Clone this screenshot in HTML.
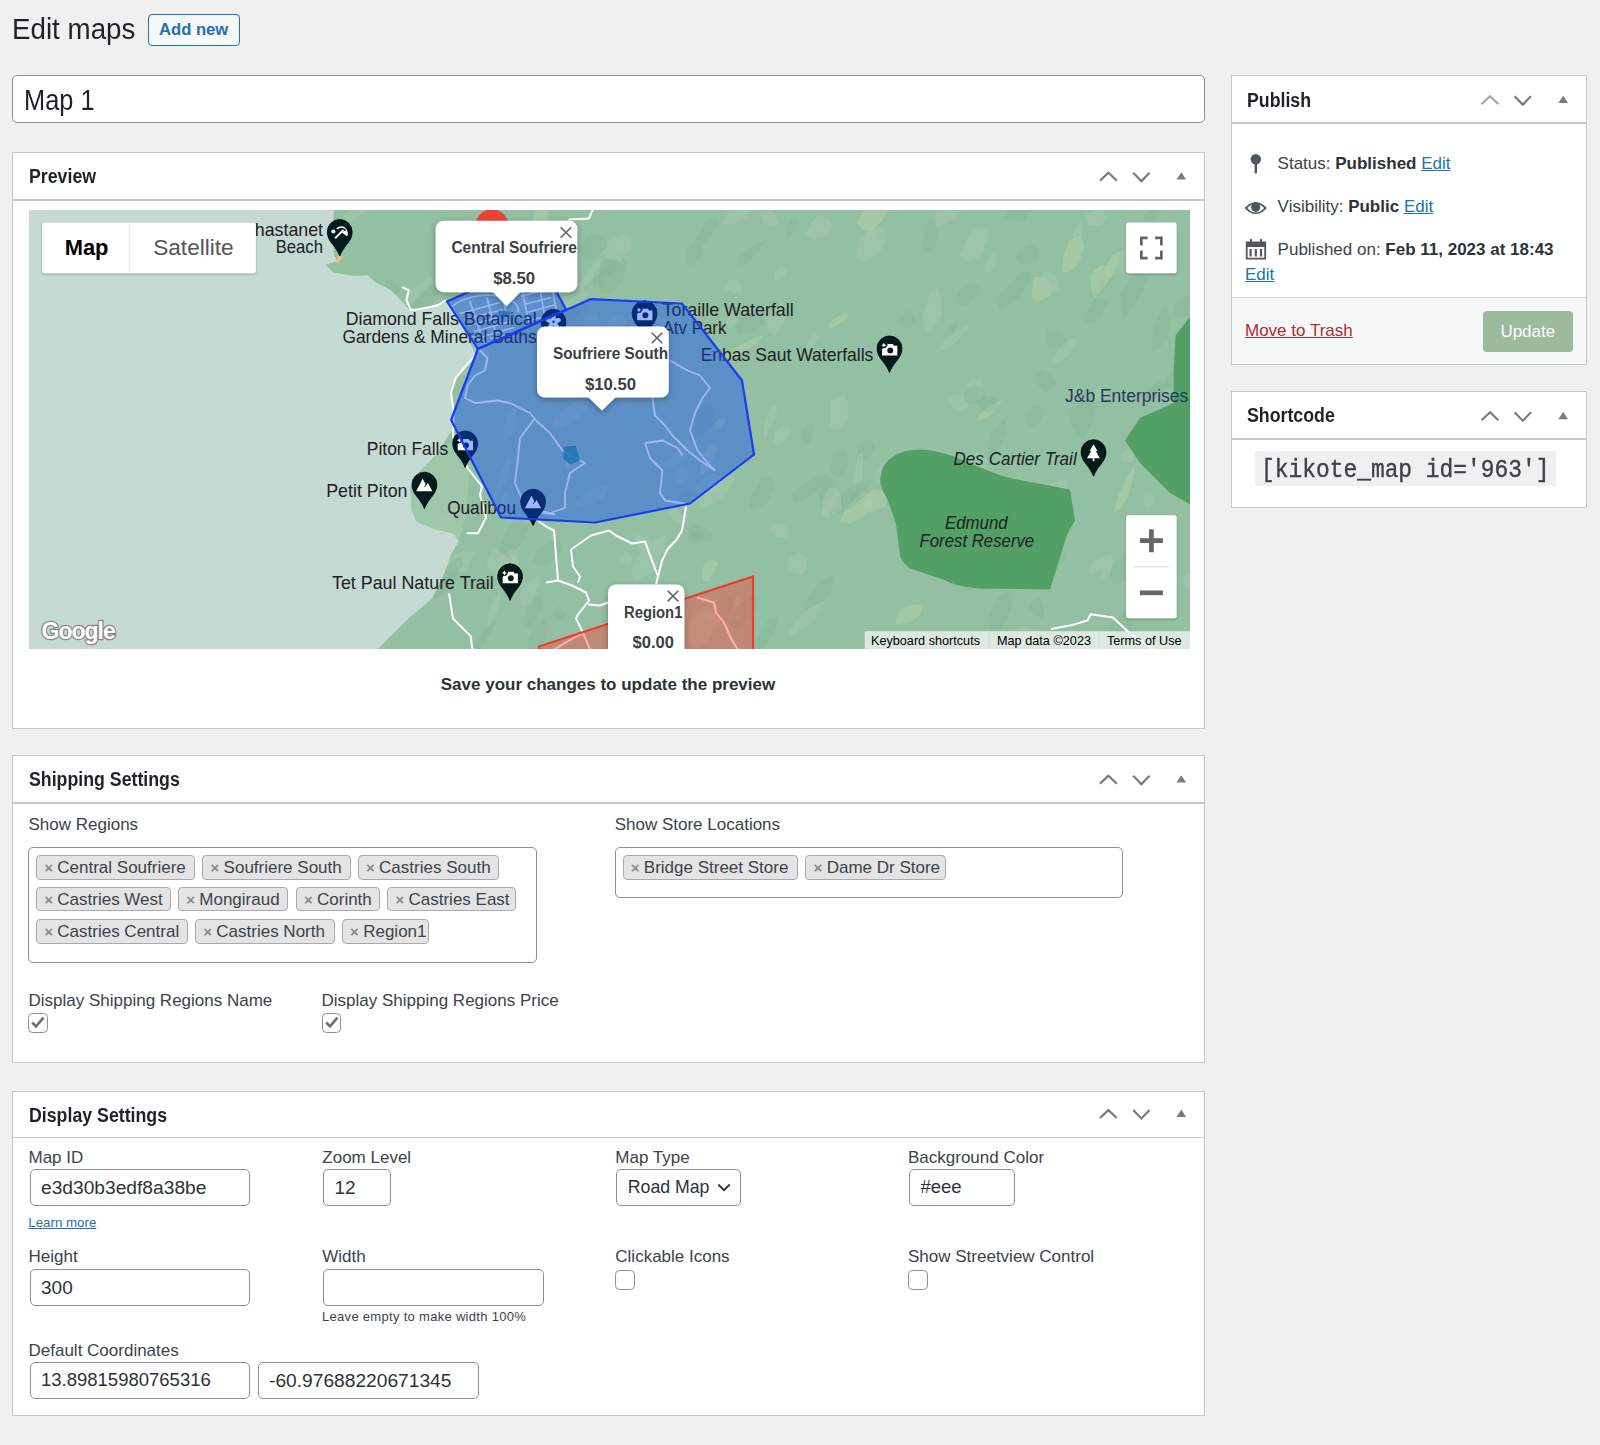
<!DOCTYPE html><html><head><meta charset="utf-8"><style>
*{box-sizing:border-box;margin:0;padding:0}
html,body{width:1600px;height:1445px;overflow:hidden;background:#f0f0f1;font-family:"Liberation Sans",sans-serif}
.t{position:absolute;line-height:1;white-space:nowrap}
.r{position:absolute}
.box{position:absolute;background:#fff;border:1.6px solid #c6c7ca}
.hb{position:absolute;height:1.8px;background:#c6c7ca}
.inp{position:absolute;background:#fff;border:1.3px solid #8c8f94;border-radius:5px}
.cb{position:absolute;width:20px;height:20px;background:#fff;border:1.3px solid #8c8f94;border-radius:5px}
.tag{position:absolute;height:25px;background:#e4e4e4;border:1.3px solid #aaa;border-radius:5px}
a{color:#2271b1}
svg{position:absolute;overflow:visible}
</style></head><body><div class="t" style="left:11.5px;top:14.36px;font-size:30px;color:#1d2327;transform:scaleX(0.925);transform-origin:0 0">Edit maps</div>
<div class="r" style="left:147.7px;top:13.5px;width:92px;height:32px;border:1.3px solid #2271b1;border-radius:4px;background:#f6f7f7"></div>
<div class="t" style="left:193.7px;transform:translateX(-50%);top:21.75px;font-size:16.6px;color:#2271b1;font-weight:700;">Add new</div>
<div class="r" style="left:11.5px;top:75.2px;width:1193.5px;height:47.6px;background:#fff;border:1.3px solid #8c8f94;border-radius:5px"></div>
<div class="t" style="left:24px;top:85.43px;font-size:29.5px;color:#1d2327;transform:scaleX(0.86);transform-origin:0 0">Map 1</div>
<div class="box" style="left:11.5px;top:152.3px;width:1193.5px;height:577px"></div>
<div class="hb" style="left:12px;top:199.2px;width:1192px"></div>
<div class="t" style="left:28.5px;top:167.39px;font-size:19.5px;color:#1d2327;font-weight:700;transform:scaleX(0.91);transform-origin:0 0">Preview</div>
<svg style="left:0;top:0" width="1600" height="1445" viewBox="0 0 1600 1445"><polyline points="1100.0,180.6 1108.4,172.70000000000002 1116.8000000000002,180.6" fill="none" stroke="#787c82" stroke-width="2.2"/><polyline points="1133.2,172.70000000000002 1141.4,181.1 1149.6000000000001,172.70000000000002" fill="none" stroke="#787c82" stroke-width="2.2"/><polygon points="1181.3,172.20000000000002 1186.1,179.6 1176.5,179.6" fill="#787c82"/></svg>
<div class="r" style="left:29px;top:209.5px;width:1161px;height:439px;overflow:hidden;background:#93bfa2">
<svg style="left:0;top:0" width="1161" height="439" viewBox="29 209.5 1161 439" font-family="Liberation Sans, sans-serif">
<polygon points="602.9,257.6 600.4,265.3 592.9,278.1 580.6,289.9 580.9,283.3 584.5,274.2 594.3,261.0" fill="#a2c8ac" opacity="0.6"/>
<polygon points="344.7,581.6 347.7,584.5 344.6,595.0 341.4,599.9 336.6,602.3 336.1,592.2 340.5,583.2" fill="#aacca8" opacity="0.7"/>
<polygon points="1022.4,509.3 1024.2,515.4 1021.5,527.4 1013.1,528.5 1007.0,523.3 1006.1,516.6 1015.1,509.2" fill="#88b596" opacity="0.4"/>
<polygon points="939.5,461.7 936.7,472.7 928.6,483.0 912.9,486.2 911.7,478.7 918.9,468.5 930.2,463.3" fill="#88b596" opacity="0.4"/>
<polygon points="356.6,544.5 361.1,548.6 358.3,556.4 351.6,558.2 346.4,555.7 347.9,550.7 352.0,544.7" fill="#88b596" opacity="0.4"/>
<polygon points="513.3,405.1 517.0,412.1 515.9,428.6 511.2,435.9 503.4,440.8 503.7,426.8 508.4,412.2" fill="#a2c8ac" opacity="0.6"/>
<polygon points="872.7,227.5 876.0,230.6 877.1,236.4 870.3,240.8 866.8,238.2 866.4,233.3 867.0,225.6" fill="#a2c8ac" opacity="0.6"/>
<polygon points="722.5,416.7 725.8,418.8 723.1,426.3 718.8,428.7 712.8,429.8 714.9,422.7 718.9,417.1" fill="#aacca8" opacity="0.7"/>
<polygon points="1004.5,419.6 1006.3,432.5 997.8,451.6 990.2,463.8 987.6,457.5 988.1,446.6 993.7,428.5" fill="#88b596" opacity="0.4"/>
<polygon points="712.6,607.8 720.8,617.3 709.3,637.9 696.2,651.4 689.1,639.8 687.2,626.3 703.0,606.6" fill="#a2c8ac" opacity="0.6"/>
<polygon points="474.3,551.8 469.6,561.9 465.5,572.5 450.9,570.2 445.8,562.1 453.2,553.8 464.5,550.5" fill="#a2c8ac" opacity="0.6"/>
<polygon points="331.4,629.7 324.5,640.9 314.5,651.1 302.2,653.0 298.8,645.6 305.2,637.5 318.6,628.2" fill="#aacca8" opacity="0.7"/>
<polygon points="686.5,607.1 689.6,611.6 684.0,626.4 672.3,632.0 666.8,627.6 671.3,617.8 680.3,606.4" fill="#a2c8ac" opacity="0.6"/>
<polygon points="561.0,541.9 561.3,550.7 551.7,561.2 540.6,565.2 533.0,561.5 538.7,547.4 551.1,541.4" fill="#88b596" opacity="0.4"/>
<polygon points="1152.8,576.9 1156.7,580.0 1152.8,587.4 1145.5,591.5 1141.2,590.0 1142.6,581.1 1148.5,576.3" fill="#a2c8ac" opacity="0.6"/>
<polygon points="1196.0,572.5 1198.5,579.5 1193.7,584.2 1189.1,588.1 1183.8,585.4 1182.2,576.7 1191.8,570.9" fill="#a2c8ac" opacity="0.6"/>
<polygon points="546.1,198.8 548.1,214.1 544.2,229.5 536.5,237.9 530.5,242.5 530.4,224.1 537.5,207.4" fill="#aacca8" opacity="0.7"/>
<polygon points="380.6,582.1 384.9,591.7 381.2,595.9 375.0,597.0 368.6,593.1 363.9,584.8 370.5,581.9" fill="#a2c8ac" opacity="0.6"/>
<polygon points="461.5,354.1 466.9,358.1 466.9,363.7 461.6,367.6 456.3,368.0 453.3,361.4 457.0,355.0" fill="#88b596" opacity="0.4"/>
<polygon points="1055.7,510.1 1057.7,516.0 1055.3,530.0 1042.9,542.6 1039.8,535.1 1041.2,523.1 1048.6,512.0" fill="#a2c8ac" opacity="0.6"/>
<polygon points="545.5,616.9 546.9,629.4 542.5,646.0 533.1,656.9 527.7,652.1 528.1,638.9 537.2,625.1" fill="#88b596" opacity="0.4"/>
<polygon points="588.4,296.4 585.4,307.0 574.4,317.7 563.3,324.8 561.9,314.7 564.3,306.5 577.7,295.6" fill="#88b596" opacity="0.4"/>
<polygon points="438.4,429.8 440.0,440.9 427.6,448.2 419.0,451.5 412.8,443.7 415.2,434.3 427.6,426.5" fill="#88b596" opacity="0.4"/>
<polygon points="750.1,192.7 751.8,200.1 747.2,216.5 735.0,223.0 722.6,224.1 729.8,204.6 741.3,188.9" fill="#a2c8ac" opacity="0.6"/>
<polygon points="858.1,487.5 859.4,491.9 859.9,497.9 854.5,502.7 850.6,499.4 850.0,494.0 852.1,488.5" fill="#88b596" opacity="0.4"/>
<polygon points="495.9,619.6 488.8,635.4 478.4,652.6 468.0,665.2 465.2,662.6 472.8,646.1 484.2,630.1" fill="#88b596" opacity="0.4"/>
<polygon points="937.5,286.5 940.8,298.5 941.4,315.7 933.9,325.4 925.6,333.3 923.0,313.7 931.2,290.5" fill="#a2c8ac" opacity="0.6"/>
<polygon points="644.2,364.6 649.1,368.0 638.0,391.4 628.9,401.5 622.8,397.2 622.1,383.0 637.1,361.9" fill="#a2c8ac" opacity="0.6"/>
<polygon points="1125.7,612.1 1131.0,618.6 1133.5,633.8 1123.5,641.3 1115.4,641.3 1108.8,629.8 1115.8,617.4" fill="#88b596" opacity="0.4"/>
<polygon points="575.1,442.4 579.4,447.4 573.6,460.0 569.1,466.5 565.5,466.4 565.7,457.0 568.5,445.5" fill="#aacca8" opacity="0.7"/>
<polygon points="980.9,379.5 983.9,387.5 981.8,398.6 972.0,402.0 966.3,399.1 963.9,388.4 972.8,377.5" fill="#a2c8ac" opacity="0.6"/>
<polygon points="327.9,207.2 337.1,212.7 328.7,232.0 313.9,234.6 307.3,229.1 305.0,215.7 319.3,202.5" fill="#88b596" opacity="0.4"/>
<polygon points="1002.3,398.7 996.7,407.3 988.4,417.1 979.9,419.9 975.2,419.5 983.3,410.5 995.3,401.7" fill="#aacca8" opacity="0.7"/>
<polygon points="588.9,399.7 589.0,407.4 573.3,422.1 553.8,429.7 552.9,420.1 561.6,410.3 577.1,400.2" fill="#a2c8ac" opacity="0.6"/>
<polygon points="688.0,503.3 688.6,511.9 685.3,522.3 676.4,522.2 669.2,515.9 670.4,506.4 676.4,499.5" fill="#a2c8ac" opacity="0.6"/>
<polygon points="434.7,372.4 444.4,377.6 445.2,389.3 433.1,391.6 422.5,391.6 418.9,380.0 425.4,373.6" fill="#a2c8ac" opacity="0.6"/>
<polygon points="601.0,276.4 604.1,280.1 604.4,286.2 597.5,287.2 593.5,285.3 593.3,280.5 594.8,274.8" fill="#88b596" opacity="0.4"/>
<polygon points="332.9,363.5 340.4,376.8 334.6,396.0 326.8,415.0 318.6,405.8 318.0,392.4 320.2,378.0" fill="#a2c8ac" opacity="0.6"/>
<polygon points="1136.1,462.0 1132.7,479.1 1127.7,497.3 1120.1,508.2 1113.5,512.6 1118.4,494.5 1127.2,476.3" fill="#aacca8" opacity="0.7"/>
<polygon points="630.2,552.9 633.0,558.2 629.0,563.9 622.1,562.7 619.7,559.1 620.6,554.4 626.1,551.0" fill="#a2c8ac" opacity="0.6"/>
<polygon points="871.0,494.8 873.8,506.3 862.0,517.3 849.8,522.7 839.2,521.4 848.2,504.6 863.2,490.5" fill="#aacca8" opacity="0.7"/>
<polygon points="514.1,547.1 518.5,562.2 516.4,574.5 508.0,591.0 498.1,587.9 495.9,570.7 500.1,555.9" fill="#aacca8" opacity="0.7"/>
<polygon points="1156.5,238.4 1162.6,244.4 1155.5,257.9 1150.0,267.9 1143.1,264.0 1140.0,252.0 1150.5,240.1" fill="#a2c8ac" opacity="0.6"/>
<polygon points="395.3,367.1 402.8,376.0 399.5,388.6 391.3,397.6 381.5,399.3 383.4,384.5 388.6,369.9" fill="#a2c8ac" opacity="0.6"/>
<polygon points="312.6,598.3 316.2,609.2 315.0,620.5 304.4,622.2 295.0,619.0 296.2,608.5 300.7,597.3" fill="#88b596" opacity="0.4"/>
<polygon points="407.2,399.9 412.7,419.9 410.2,435.0 396.7,447.6 386.6,438.9 386.3,426.0 392.8,406.7" fill="#aacca8" opacity="0.7"/>
<polygon points="472.4,289.3 473.8,300.6 467.8,309.0 459.6,317.7 454.9,313.2 456.9,302.7 462.9,292.4" fill="#a2c8ac" opacity="0.6"/>
<polygon points="686.1,486.7 692.2,492.3 688.2,505.8 682.9,515.1 678.0,511.6 675.7,502.7 681.0,491.4" fill="#88b596" opacity="0.4"/>
<polygon points="884.0,226.3 887.0,239.4 878.9,253.5 863.1,261.7 855.6,258.3 859.0,239.1 871.1,227.8" fill="#a2c8ac" opacity="0.6"/>
<polygon points="1141.1,223.3 1147.2,230.5 1144.0,240.4 1138.5,245.8 1131.3,243.9 1129.5,234.5 1132.2,222.0" fill="#88b596" opacity="0.4"/>
<polygon points="1117.8,264.9 1117.4,272.3 1105.3,287.7 1093.2,302.0 1092.9,294.1 1098.2,280.5 1111.4,267.6" fill="#88b596" opacity="0.4"/>
<polygon points="990.0,395.5 998.0,398.2 996.0,408.2 989.7,411.2 982.0,410.2 978.0,404.0 984.0,395.4" fill="#88b596" opacity="0.4"/>
<polygon points="507.3,493.5 508.9,496.0 507.2,502.2 504.2,504.5 500.8,503.1 500.1,498.0 503.6,492.5" fill="#a2c8ac" opacity="0.6"/>
<polygon points="665.9,318.7 669.5,323.8 665.6,329.3 660.8,331.2 656.2,326.4 655.9,321.5 657.1,314.7" fill="#a2c8ac" opacity="0.6"/>
<polygon points="438.1,283.6 438.2,290.2 431.8,304.7 417.6,309.9 412.0,306.4 418.5,291.5 431.6,283.1" fill="#88b596" opacity="0.4"/>
<polygon points="401.2,303.6 401.4,310.8 398.9,316.4 391.5,315.9 386.9,311.5 388.1,304.4 394.3,303.9" fill="#88b596" opacity="0.4"/>
<polygon points="522.4,519.7 528.5,526.9 519.6,550.0 504.0,566.5 496.5,561.0 501.2,541.4 512.7,520.7" fill="#88b596" opacity="0.4"/>
<polygon points="589.1,292.1 587.3,296.7 576.2,304.7 563.1,312.6 560.5,308.8 571.6,298.2 583.3,290.7" fill="#a2c8ac" opacity="0.6"/>
<polygon points="1042.8,602.5 1044.2,608.8 1043.2,618.0 1034.6,615.2 1029.0,607.0 1032.0,600.3 1038.3,597.2" fill="#88b596" opacity="0.4"/>
<polygon points="589.9,389.7 593.8,392.7 592.3,400.0 587.6,401.1 581.8,400.0 580.4,394.2 585.5,390.0" fill="#88b596" opacity="0.4"/>
<polygon points="1080.9,218.5 1082.6,233.1 1079.1,252.3 1074.6,265.9 1070.0,268.7 1070.5,251.1 1073.3,233.5" fill="#a2c8ac" opacity="0.6"/>
<polygon points="764.9,240.4 758.9,250.0 749.3,261.4 740.1,265.0 737.8,261.5 741.9,252.4 755.2,244.3" fill="#88b596" opacity="0.4"/>
<polygon points="1107.9,298.9 1105.4,308.0 1098.7,319.5 1085.9,322.7 1082.8,316.0 1088.8,308.0 1097.0,297.7" fill="#88b596" opacity="0.4"/>
<polygon points="522.6,284.6 523.9,291.1 516.8,298.7 506.1,303.6 503.8,292.2 507.1,285.6 516.2,278.1" fill="#a2c8ac" opacity="0.6"/>
<polygon points="962.0,393.2 969.8,395.7 968.8,405.5 960.5,410.4 953.7,409.2 948.3,400.2 954.3,392.7" fill="#a2c8ac" opacity="0.6"/>
<polygon points="984.0,387.4 985.2,397.0 977.2,402.8 967.5,403.3 963.5,396.0 965.8,387.6 974.7,385.1" fill="#88b596" opacity="0.4"/>
<polygon points="723.5,475.6 722.5,487.9 712.9,494.0 703.5,494.7 694.0,490.1 702.2,478.0 712.6,472.5" fill="#a2c8ac" opacity="0.6"/>
<polygon points="770.6,476.3 774.2,485.2 768.1,501.5 753.7,510.0 749.1,506.3 752.5,492.0 761.5,477.4" fill="#88b596" opacity="0.4"/>
<polygon points="627.5,317.4 625.0,326.1 621.0,335.8 610.4,333.6 606.5,326.9 609.6,318.5 617.8,312.3" fill="#a2c8ac" opacity="0.6"/>
<polygon points="1037.7,404.8 1042.3,410.9 1041.5,420.1 1034.3,425.2 1028.1,426.6 1027.0,415.9 1030.6,406.6" fill="#88b596" opacity="0.4"/>
<polygon points="886.6,491.7 885.7,506.3 875.6,509.7 870.3,512.4 860.5,506.3 866.5,496.3 872.9,488.7" fill="#aacca8" opacity="0.7"/>
<polygon points="619.7,249.8 626.7,261.6 621.7,283.4 611.0,292.4 599.9,292.7 598.0,274.5 610.1,257.0" fill="#88b596" opacity="0.4"/>
<polygon points="519.6,254.3 519.3,259.1 512.1,273.6 504.4,281.4 499.9,280.9 504.1,267.4 511.8,259.1" fill="#a2c8ac" opacity="0.6"/>
<polygon points="887.8,207.7 886.8,214.6 874.3,228.8 862.8,230.4 857.5,222.8 863.0,210.9 876.6,206.5" fill="#aacca8" opacity="0.7"/>
<polygon points="695.5,442.0 697.2,447.8 679.1,462.2 667.4,467.6 661.8,465.1 673.0,454.5 688.4,439.7" fill="#a2c8ac" opacity="0.6"/>
<polygon points="795.2,215.0 797.7,220.4 794.0,231.5 788.8,239.2 785.1,237.7 785.9,228.1 789.8,219.0" fill="#88b596" opacity="0.4"/>
<polygon points="396.9,282.7 400.3,290.6 395.0,294.6 388.2,293.4 383.2,286.1 385.6,281.9 392.0,279.3" fill="#88b596" opacity="0.4"/>
<polygon points="416.8,554.1 421.8,562.8 411.9,577.2 401.3,586.2 397.2,578.8 394.8,565.4 401.7,555.9" fill="#a2c8ac" opacity="0.6"/>
<polygon points="384.8,591.0 386.6,594.5 380.9,601.4 376.1,602.2 371.5,601.3 375.2,595.6 381.8,588.7" fill="#a2c8ac" opacity="0.6"/>
<polygon points="314.0,196.4 318.8,201.6 319.9,218.1 311.3,229.0 301.5,223.8 298.2,212.7 305.7,197.4" fill="#a2c8ac" opacity="0.6"/>
<polygon points="666.2,534.7 664.0,549.2 654.1,571.6 634.8,582.2 631.4,571.8 635.8,558.2 650.8,540.2" fill="#a2c8ac" opacity="0.6"/>
<polygon points="1112.0,555.5 1112.3,564.7 1109.8,573.2 1103.5,579.3 1099.5,579.3 1100.7,569.1 1107.1,561.1" fill="#a2c8ac" opacity="0.6"/>
<polygon points="807.9,557.5 806.6,566.3 802.6,575.1 792.4,571.6 786.3,565.5 790.9,556.2 799.4,551.2" fill="#a2c8ac" opacity="0.6"/>
<polygon points="775.2,403.9 777.4,411.0 772.2,423.8 765.0,439.3 762.9,430.6 764.2,422.4 769.9,407.1" fill="#a2c8ac" opacity="0.6"/>
<polygon points="772.6,210.4 778.3,221.5 774.6,226.8 763.6,222.6 761.0,213.9 761.3,208.2 764.4,204.3" fill="#a2c8ac" opacity="0.6"/>
<polygon points="1088.9,388.5 1095.2,394.4 1094.2,419.5 1082.7,439.3 1074.2,430.5 1068.4,412.3 1080.9,390.7" fill="#88b596" opacity="0.4"/>
<polygon points="343.1,314.3 347.9,322.9 336.2,328.7 330.0,330.4 319.5,324.0 325.9,312.0 338.8,309.4" fill="#88b596" opacity="0.4"/>
<polygon points="594.6,311.3 598.2,316.3 600.5,325.2 593.6,328.6 584.3,328.5 583.9,319.8 585.3,313.9" fill="#a2c8ac" opacity="0.6"/>
<polygon points="1067.7,480.0 1067.5,487.9 1058.5,493.9 1046.8,500.0 1046.4,494.2 1050.6,483.3 1062.2,479.1" fill="#a2c8ac" opacity="0.6"/>
<polygon points="764.1,334.8 756.2,343.4 740.0,353.8 726.3,360.9 717.3,359.7 736.2,346.7 755.9,336.5" fill="#aacca8" opacity="0.7"/>
<polygon points="968.2,325.2 967.8,328.9 953.0,344.5 940.1,350.9 938.7,347.7 945.9,337.6 962.5,326.8" fill="#a2c8ac" opacity="0.6"/>
<polygon points="384.9,462.1 386.0,470.4 384.3,483.9 376.8,492.9 371.8,488.1 370.5,479.3 378.2,466.0" fill="#88b596" opacity="0.4"/>
<polygon points="319.7,601.2 326.0,609.9 323.0,621.3 312.9,629.1 304.4,622.8 299.9,613.0 308.3,602.5" fill="#aacca8" opacity="0.7"/>
<polygon points="650.0,538.9 652.4,550.8 646.6,551.1 640.7,549.5 634.5,544.7 635.5,533.4 643.6,535.9" fill="#a2c8ac" opacity="0.6"/>
<polygon points="844.3,446.6 848.9,458.4 846.3,470.1 840.2,477.0 832.0,474.9 831.3,466.8 833.7,451.7" fill="#88b596" opacity="0.4"/>
<polygon points="460.7,555.5 463.3,564.0 450.3,584.0 440.1,595.5 430.4,598.4 437.2,578.0 453.8,559.2" fill="#88b596" opacity="0.4"/>
<polygon points="777.3,616.6 775.6,628.3 766.3,642.8 759.4,653.1 749.7,655.8 756.5,637.3 770.0,617.3" fill="#88b596" opacity="0.4"/>
<polygon points="335.9,482.3 340.4,489.8 337.0,499.9 331.3,504.2 323.5,499.7 321.0,492.9 326.8,484.9" fill="#aacca8" opacity="0.7"/>
<polygon points="783.7,264.7 787.3,268.6 784.3,275.9 778.4,280.5 774.7,279.1 774.7,271.4 779.6,265.3" fill="#a2c8ac" opacity="0.6"/>
<polygon points="530.4,289.6 529.0,300.1 523.1,313.1 512.5,317.2 508.7,312.7 510.1,303.8 519.0,295.3" fill="#a2c8ac" opacity="0.6"/>
<polygon points="702.0,532.1 702.9,537.6 697.9,543.0 689.5,543.0 686.8,538.1 691.0,532.3 698.4,528.2" fill="#88b596" opacity="0.4"/>
<polygon points="1140.5,246.9 1136.4,254.5 1122.1,269.9 1107.8,278.2 1106.9,274.5 1116.6,263.5 1131.2,250.7" fill="#88b596" opacity="0.4"/>
<polygon points="657.2,334.0 661.5,343.6 655.1,360.8 640.7,367.7 627.8,365.1 635.4,347.4 650.7,333.2" fill="#a2c8ac" opacity="0.6"/>
<polygon points="354.9,448.5 356.5,458.2 348.1,470.4 336.9,472.9 327.4,465.9 333.8,453.4 343.7,445.9" fill="#aacca8" opacity="0.7"/>
<polygon points="833.3,574.2 831.4,591.5 820.0,608.5 805.3,627.0 802.5,618.8 805.6,602.0 819.3,581.1" fill="#88b596" opacity="0.4"/>
<polygon points="1104.0,387.9 1106.7,391.9 1103.3,400.6 1097.6,401.3 1091.6,401.1 1094.6,393.9 1097.5,386.4" fill="#a2c8ac" opacity="0.6"/>
<polygon points="834.0,497.3 836.4,504.0 831.3,510.8 823.1,515.6 820.9,509.8 818.6,501.6 825.7,495.6" fill="#a2c8ac" opacity="0.6"/>
<polygon points="369.3,197.6 371.3,203.3 357.2,218.2 344.4,224.7 337.2,224.6 347.3,210.3 363.0,197.7" fill="#a2c8ac" opacity="0.6"/>
<polygon points="356.4,612.1 357.0,617.9 337.5,631.9 325.6,637.7 323.7,631.9 330.9,622.2 350.6,610.9" fill="#88b596" opacity="0.4"/>
<polygon points="460.4,356.8 464.6,363.5 468.2,373.8 456.5,375.8 448.9,371.4 448.0,364.7 451.4,356.5" fill="#a2c8ac" opacity="0.6"/>
<polygon points="448.1,516.5 446.4,523.4 442.1,528.3 434.3,530.2 431.3,526.3 435.4,519.0 440.2,515.7" fill="#a2c8ac" opacity="0.6"/>
<polygon points="540.4,595.8 543.2,603.7 538.5,615.8 530.3,627.9 525.1,624.7 527.5,610.7 534.0,600.2" fill="#88b596" opacity="0.4"/>
<polygon points="1076.5,335.9 1075.1,342.9 1068.1,355.6 1058.0,362.8 1050.9,364.5 1058.0,349.8 1069.3,339.8" fill="#a2c8ac" opacity="0.6"/>
<polygon points="337.5,492.5 338.0,501.1 328.8,517.5 322.9,524.7 313.7,525.9 321.0,511.3 327.9,500.1" fill="#88b596" opacity="0.4"/>
<polygon points="577.9,370.6 579.1,376.6 575.8,381.5 572.1,382.3 565.9,380.4 566.0,372.0 573.4,370.3" fill="#aacca8" opacity="0.7"/>
<polygon points="534.0,245.5 533.5,252.2 518.0,262.2 509.2,266.3 502.7,262.9 512.0,252.7 530.4,242.1" fill="#88b596" opacity="0.4"/>
<polygon points="716.8,216.4 718.4,225.6 709.5,237.2 700.3,246.9 693.6,243.1 701.1,229.6 709.7,216.9" fill="#88b596" opacity="0.4"/>
<polygon points="487.7,338.0 491.1,344.4 488.7,354.3 479.8,352.7 472.3,346.7 471.7,338.6 478.4,335.4" fill="#a2c8ac" opacity="0.6"/>
<polygon points="843.7,395.3 848.5,403.1 847.2,420.3 838.7,428.3 829.6,429.5 830.5,414.2 830.7,400.0" fill="#a2c8ac" opacity="0.6"/>
<polygon points="987.5,227.4 988.3,236.5 982.1,255.0 968.6,262.3 959.8,255.6 966.0,240.4 972.6,228.5" fill="#a2c8ac" opacity="0.6"/>
<polygon points="1062.3,333.2 1066.6,340.4 1058.3,345.2 1049.3,347.7 1046.3,340.3 1047.2,331.0 1056.9,331.0" fill="#88b596" opacity="0.4"/>
<polygon points="828.4,475.1 823.3,486.7 809.9,496.3 794.0,502.9 791.0,494.2 803.2,484.5 817.8,475.1" fill="#88b596" opacity="0.4"/>
<polygon points="969.3,190.3 965.9,203.3 954.7,218.5 936.5,226.4 935.2,214.1 939.7,201.0 956.0,192.6" fill="#a2c8ac" opacity="0.6"/>
<polygon points="392.4,339.7 391.3,354.1 381.7,362.8 367.0,362.7 360.9,353.3 366.5,342.1 378.9,338.9" fill="#88b596" opacity="0.4"/>
<polygon points="1101.7,209.5 1106.3,216.5 1102.7,224.2 1095.4,225.5 1087.0,224.6 1085.9,212.9 1095.0,209.9" fill="#a2c8ac" opacity="0.6"/>
<polygon points="783.5,303.2 786.4,313.3 784.1,323.7 775.0,335.5 767.8,331.5 766.4,316.8 777.2,306.1" fill="#a2c8ac" opacity="0.6"/>
<polygon points="1052.1,375.1 1056.1,382.4 1052.1,387.8 1044.7,391.3 1037.7,384.1 1034.5,374.1 1042.2,369.1" fill="#88b596" opacity="0.4"/>
<polygon points="825.3,600.6 817.8,612.9 807.0,626.8 790.6,634.9 789.3,631.6 798.5,616.8 811.4,606.1" fill="#a2c8ac" opacity="0.6"/>
<polygon points="914.2,314.5 916.2,322.1 911.0,326.9 903.5,327.6 899.3,322.9 900.8,315.2 908.8,309.5" fill="#88b596" opacity="0.4"/>
<polygon points="1162.6,198.7 1161.9,208.5 1156.0,216.6 1148.6,221.8 1144.1,221.4 1147.4,210.9 1154.6,203.9" fill="#88b596" opacity="0.4"/>
<polygon points="500.6,589.7 500.1,598.3 497.0,612.4 492.6,619.3 487.0,626.0 489.1,608.8 495.0,597.1" fill="#a2c8ac" opacity="0.6"/>
<polygon points="761.2,315.9 764.9,323.2 750.9,332.8 737.5,334.7 735.9,326.7 740.5,316.5 757.1,311.8" fill="#88b596" opacity="0.4"/>
<polygon points="992.8,526.7 999.7,534.0 992.6,544.8 984.0,550.6 978.1,548.4 975.8,535.0 985.4,525.8" fill="#a2c8ac" opacity="0.6"/>
<polygon points="816.1,331.9 818.4,337.9 813.8,344.5 810.6,348.7 805.5,350.4 806.9,341.6 812.7,333.4" fill="#a2c8ac" opacity="0.6"/>
<polygon points="738.6,596.7 741.2,603.5 742.8,613.8 735.9,621.3 730.3,620.7 731.3,611.5 731.8,600.0" fill="#a2c8ac" opacity="0.6"/>
<polygon points="617.1,259.1 616.2,269.3 609.6,274.1 600.8,275.1 599.3,267.9 600.4,260.4 607.9,257.8" fill="#88b596" opacity="0.4"/>
<polygon points="847.9,314.1 848.6,317.1 837.6,324.8 829.8,328.7 827.8,324.9 833.0,319.0 844.6,312.3" fill="#aacca8" opacity="0.7"/>
<polygon points="897.4,462.1 903.0,472.6 899.0,482.7 891.7,486.9 883.0,487.7 881.9,473.9 886.5,464.1" fill="#88b596" opacity="0.4"/>
<polygon points="628.4,642.1 634.1,645.0 634.2,655.5 627.6,659.0 618.0,659.7 619.2,650.5 621.8,641.0" fill="#a2c8ac" opacity="0.6"/>
<polygon points="1201.5,414.9 1196.6,424.0 1184.7,437.2 1170.0,444.1 1168.9,438.6 1174.6,426.2 1190.8,418.2" fill="#a2c8ac" opacity="0.6"/>
<polygon points="532.3,308.0 534.3,313.4 529.7,327.8 524.2,339.2 519.9,333.1 520.8,325.0 525.3,313.5" fill="#88b596" opacity="0.4"/>
<polygon points="1110.8,263.7 1114.9,272.6 1104.8,285.8 1094.8,298.2 1091.1,289.6 1090.4,274.5 1099.3,265.3" fill="#aacca8" opacity="0.7"/>
<polygon points="442.9,528.8 444.2,535.5 437.8,540.3 431.5,544.4 430.0,538.7 431.0,533.9 436.6,531.2" fill="#a2c8ac" opacity="0.6"/>
<polygon points="1202.7,331.4 1202.2,340.2 1191.8,353.8 1182.5,364.7 1175.6,367.5 1183.9,347.4 1197.8,330.4" fill="#a2c8ac" opacity="0.6"/>
<polygon points="548.2,273.0 550.8,280.3 549.6,288.5 545.6,295.8 540.5,297.1 541.0,286.7 543.7,277.6" fill="#a2c8ac" opacity="0.6"/>
<polygon points="1178.7,369.3 1183.4,370.4 1181.0,384.3 1174.9,390.3 1168.9,387.6 1165.9,379.9 1171.4,370.9" fill="#88b596" opacity="0.4"/>
<polygon points="609.2,485.2 605.0,495.8 592.8,503.5 578.5,507.1 575.9,502.4 585.0,491.9 599.5,485.8" fill="#a2c8ac" opacity="0.6"/>
<polygon points="870.2,439.5 875.1,445.8 871.3,453.9 864.9,462.0 858.4,456.9 858.2,449.1 860.4,440.8" fill="#88b596" opacity="0.4"/>
<polygon points="735.4,477.6 727.3,492.0 715.6,502.3 702.8,509.1 695.1,501.6 705.0,487.3 722.4,474.7" fill="#a2c8ac" opacity="0.6"/>
<polygon points="710.5,400.9 714.9,411.3 711.8,427.2 703.4,435.3 695.3,438.8 692.3,420.7 701.3,406.7" fill="#88b596" opacity="0.4"/>
<polygon points="525.4,574.5 524.6,581.4 521.1,588.0 513.0,588.2 509.3,581.2 511.0,575.2 517.0,571.4" fill="#a2c8ac" opacity="0.6"/>
<polygon points="1143.3,271.2 1147.0,279.0 1138.0,300.8 1123.6,317.7 1120.2,304.0 1121.5,291.6 1134.8,271.6" fill="#88b596" opacity="0.4"/>
<polygon points="735.8,592.4 734.9,601.0 730.7,613.4 720.6,620.6 717.6,612.8 717.0,602.2 726.8,597.0" fill="#88b596" opacity="0.4"/>
<polygon points="984.0,453.1 988.5,462.6 984.7,468.7 976.5,465.6 971.0,461.9 970.9,454.8 976.4,451.4" fill="#a2c8ac" opacity="0.6"/>
<polygon points="540.1,573.9 540.7,583.3 532.7,597.1 524.2,606.7 518.7,602.7 521.2,591.2 531.5,578.2" fill="#a2c8ac" opacity="0.6"/>
<polygon points="1131.6,449.7 1134.3,453.5 1132.5,461.4 1125.4,462.7 1120.2,460.4 1122.6,454.2 1125.7,448.2" fill="#a2c8ac" opacity="0.6"/>
<polygon points="346.8,585.4 353.0,591.0 350.5,597.5 346.5,600.5 337.5,597.1 337.6,592.5 337.5,586.8" fill="#88b596" opacity="0.4"/>
<polygon points="1168.7,382.7 1168.5,386.8 1154.6,398.7 1145.2,402.4 1141.4,398.2 1148.6,387.3 1161.3,380.6" fill="#88b596" opacity="0.4"/>
<polygon points="441.1,543.6 444.6,553.7 442.0,572.2 434.0,589.6 429.0,590.4 426.1,569.6 435.0,544.6" fill="#a2c8ac" opacity="0.6"/>
<polygon points="582.5,347.8 575.3,358.0 562.2,369.2 545.1,377.7 545.8,366.7 554.1,356.5 572.1,347.9" fill="#a2c8ac" opacity="0.6"/>
<polygon points="1153.4,495.1 1155.4,498.9 1153.1,504.5 1149.1,508.2 1143.7,505.0 1143.7,498.0 1147.1,494.2" fill="#a2c8ac" opacity="0.6"/>
<polygon points="430.0,453.1 430.5,462.7 420.6,470.9 415.1,474.6 410.0,470.0 412.9,463.8 421.2,456.2" fill="#a2c8ac" opacity="0.6"/>
<polygon points="787.8,422.9 791.0,428.5 787.0,438.6 778.3,445.1 773.1,442.7 775.1,432.1 782.2,425.2" fill="#a2c8ac" opacity="0.6"/>
<polygon points="339.4,373.7 340.8,379.8 328.5,387.8 317.2,394.0 316.9,386.1 320.1,378.2 332.0,371.6" fill="#a2c8ac" opacity="0.6"/>
<polygon points="718.6,614.3 724.0,618.9 722.3,625.0 716.5,625.9 707.0,620.8 702.9,614.1 709.9,611.1" fill="#a2c8ac" opacity="0.6"/>
<polygon points="1009.8,590.4 1012.6,606.8 1006.4,620.0 997.5,637.2 991.2,632.6 988.6,614.8 998.9,595.9" fill="#88b596" opacity="0.4"/>
<polygon points="1065.9,552.6 1063.8,562.0 1048.8,573.3 1036.0,581.6 1035.8,571.6 1042.9,563.5 1054.7,555.3" fill="#88b596" opacity="0.4"/>
<polygon points="754.6,593.9 758.9,605.1 747.3,620.7 738.4,632.9 731.4,625.5 730.9,612.5 741.2,602.0" fill="#88b596" opacity="0.4"/>
<polygon points="326.8,240.5 330.0,246.4 315.9,261.5 306.2,270.5 299.5,267.2 306.9,255.6 321.4,240.6" fill="#a2c8ac" opacity="0.6"/>
<polygon points="1046.5,276.8 1052.1,286.1 1049.3,296.2 1037.9,301.6 1031.3,297.0 1032.6,286.6 1033.0,276.8" fill="#aacca8" opacity="0.7"/>
<polygon points="712.1,558.1 718.0,562.6 713.1,573.1 709.1,580.6 703.2,580.8 701.3,570.0 705.6,561.4" fill="#aacca8" opacity="0.7"/>
<polygon points="924.0,604.1 920.6,613.6 909.3,622.2 895.9,623.5 896.4,618.1 900.6,608.2 912.9,604.1" fill="#aacca8" opacity="0.7"/>
<polygon points="827.5,216.7 832.5,226.7 825.6,236.5 812.8,239.0 804.8,234.4 810.5,222.9 817.8,215.1" fill="#a2c8ac" opacity="0.6"/>
<polygon points="1049.7,553.3 1050.2,558.7 1045.5,566.5 1039.1,573.0 1033.2,573.1 1036.4,560.5 1044.5,554.4" fill="#88b596" opacity="0.4"/>
<polygon points="699.4,244.9 703.5,248.8 699.7,260.2 691.0,265.6 687.1,259.4 686.8,252.4 692.5,243.7" fill="#88b596" opacity="0.4"/>
<polygon points="556.5,349.1 559.8,361.1 552.2,376.3 539.6,393.8 537.7,384.3 536.9,369.3 549.0,350.7" fill="#88b596" opacity="0.4"/>
<polygon points="1038.7,247.9 1038.2,259.2 1028.6,263.6 1020.5,264.8 1016.5,257.8 1019.3,249.0 1029.5,244.1" fill="#88b596" opacity="0.4"/>
<polygon points="1118.6,252.9 1118.5,260.4 1114.8,270.1 1106.5,278.0 1104.5,272.3 1105.8,265.7 1112.5,254.3" fill="#aacca8" opacity="0.7"/>
<polygon points="974.7,554.3 977.6,566.2 980.1,582.5 968.2,590.0 961.2,587.4 953.7,574.8 965.0,559.0" fill="#88b596" opacity="0.4"/>
<polygon points="932.7,219.5 936.4,227.7 936.3,244.0 930.2,253.3 924.3,253.0 922.8,241.7 926.4,223.9" fill="#88b596" opacity="0.4"/>
<polygon points="505.5,554.3 506.3,564.0 502.0,572.1 491.0,572.7 486.1,564.2 488.7,557.0 495.0,548.3" fill="#a2c8ac" opacity="0.6"/>
<polygon points="1026.7,625.4 1034.7,631.1 1032.2,642.3 1025.5,649.4 1015.6,645.7 1012.1,637.8 1014.9,628.5" fill="#a2c8ac" opacity="0.6"/>
<polygon points="495.3,313.4 491.9,325.7 478.5,332.6 469.9,335.0 459.8,329.7 469.7,319.0 480.3,312.8" fill="#88b596" opacity="0.4"/>
<polygon points="1196.4,334.9 1196.8,340.8 1197.3,346.7 1192.0,349.9 1186.0,348.5 1185.8,341.0 1191.3,337.8" fill="#88b596" opacity="0.4"/>
<polygon points="809.3,422.0 813.1,426.3 811.9,437.2 808.1,445.1 803.8,440.8 800.5,434.3 805.1,426.9" fill="#88b596" opacity="0.4"/>
<polygon points="1058.7,550.6 1058.7,554.7 1046.3,563.7 1038.9,567.7 1035.8,565.2 1042.5,558.2 1051.9,551.3" fill="#a2c8ac" opacity="0.6"/>
<polygon points="830.5,476.4 836.2,481.4 831.8,497.6 826.1,511.2 820.4,508.1 818.0,494.8 824.4,480.9" fill="#88b596" opacity="0.4"/>
<polygon points="1200.5,298.0 1200.3,312.0 1189.7,315.7 1183.0,316.9 1173.7,314.8 1177.3,299.9 1189.0,293.9" fill="#88b596" opacity="0.4"/>
<polygon points="538.7,266.5 543.9,270.8 543.3,277.5 540.1,282.5 531.8,280.7 526.2,273.1 530.3,267.0" fill="#88b596" opacity="0.4"/>
<polygon points="862.4,452.4 863.7,458.1 862.0,479.3 855.1,491.7 851.6,492.9 853.5,476.4 857.9,455.1" fill="#a2c8ac" opacity="0.6"/>
<polygon points="631.9,236.1 631.1,248.2 620.4,260.8 608.5,258.4 602.3,252.1 606.9,241.7 622.3,233.3" fill="#a2c8ac" opacity="0.6"/>
<polygon points="871.6,478.6 864.2,496.3 851.1,508.0 832.3,516.2 826.8,510.9 840.1,494.5 855.7,482.8" fill="#88b596" opacity="0.4"/>
<polygon points="603.6,235.0 608.1,246.4 597.1,256.4 585.8,259.5 579.3,251.7 581.6,243.6 591.1,232.2" fill="#88b596" opacity="0.4"/>
<polygon points="1113.0,552.8 1112.8,556.7 1101.2,569.0 1090.5,574.3 1087.9,569.4 1093.7,560.2 1105.3,555.0" fill="#a2c8ac" opacity="0.6"/>
<polygon points="562.8,608.9 565.8,613.5 562.3,619.2 556.3,618.3 553.2,614.0 554.2,610.2 558.8,605.4" fill="#88b596" opacity="0.4"/>
<polygon points="837.7,488.1 841.0,494.4 841.5,509.1 827.7,517.9 821.1,515.6 823.3,499.6 828.9,487.0" fill="#a2c8ac" opacity="0.6"/>
<polygon points="703.3,527.1 712.5,533.8 710.7,540.4 700.4,540.3 691.8,535.5 688.6,528.4 694.0,523.3" fill="#88b596" opacity="0.4"/>
<polygon points="466.8,262.0 470.1,269.2 469.2,275.9 462.0,280.3 454.9,275.2 453.0,266.8 456.6,260.7" fill="#88b596" opacity="0.4"/>
<polygon points="409.4,300.5 410.0,308.8 404.1,324.0 394.0,335.3 390.4,328.3 393.1,319.2 401.1,305.5" fill="#88b596" opacity="0.4"/>
<polygon points="409.0,395.3 409.6,403.0 407.5,417.2 400.2,434.1 398.8,425.0 398.2,415.5 403.6,396.2" fill="#a2c8ac" opacity="0.6"/>
<polygon points="1079.9,235.2 1084.9,245.2 1078.8,263.0 1068.9,271.8 1061.9,272.0 1063.1,257.3 1068.8,239.9" fill="#aacca8" opacity="0.7"/>
<polygon points="737.9,279.7 741.5,287.3 740.6,293.1 734.4,292.9 725.2,289.4 725.6,282.6 731.8,278.4" fill="#a2c8ac" opacity="0.6"/>
<polygon points="511.1,456.1 513.8,459.8 505.9,481.7 497.1,496.5 493.2,498.2 498.0,477.3 507.3,455.7" fill="#a2c8ac" opacity="0.6"/>
<polygon points="1196.3,474.7 1202.5,479.3 1200.7,489.9 1192.0,495.6 1186.1,491.8 1185.1,484.8 1188.5,475.5" fill="#88b596" opacity="0.4"/>
<polygon points="714.9,442.6 717.5,447.6 710.0,464.2 704.5,473.0 699.6,474.6 701.3,459.4 709.2,443.3" fill="#aacca8" opacity="0.7"/>
<polygon points="1165.5,307.1 1169.0,313.8 1168.5,334.6 1159.8,347.4 1151.8,350.7 1152.9,330.2 1159.2,313.1" fill="#88b596" opacity="0.4"/>
<polygon points="914.8,454.9 907.2,471.3 893.5,478.8 879.4,482.7 872.2,477.2 881.3,461.6 898.5,453.4" fill="#a2c8ac" opacity="0.6"/>
<polygon points="1028.9,200.2 1032.0,205.8 1025.8,220.3 1013.8,220.5 1003.4,217.9 1010.0,203.8 1020.3,197.1" fill="#88b596" opacity="0.4"/>
<polygon points="994.3,252.9 996.7,259.4 994.5,267.5 989.2,271.9 984.6,270.3 985.7,263.1 989.9,254.2" fill="#a2c8ac" opacity="0.6"/>
<polygon points="648.5,620.7 647.6,636.5 636.5,647.2 621.5,658.1 613.2,651.0 623.2,636.1 632.9,625.0" fill="#88b596" opacity="0.4"/>
<polygon points="954.9,322.0 957.9,324.6 954.9,330.6 953.4,333.8 948.9,335.7 948.7,327.8 951.6,322.4" fill="#88b596" opacity="0.4"/>
<polygon points="733.6,313.3 736.7,317.4 734.8,324.3 731.7,327.7 727.4,327.7 725.6,321.0 728.3,315.7" fill="#a2c8ac" opacity="0.6"/>
<polygon points="522.6,544.1 516.0,556.4 506.9,570.9 497.6,577.1 492.2,578.7 500.2,565.3 511.3,552.2" fill="#a2c8ac" opacity="0.6"/>
<polygon points="782.7,523.6 787.6,528.1 789.3,536.2 780.9,537.5 773.1,534.4 768.8,528.8 773.2,522.4" fill="#a2c8ac" opacity="0.6"/>
<polygon points="592.0,331.4 592.2,338.0 578.5,352.6 570.7,359.4 565.3,359.9 572.0,347.9 586.2,334.2" fill="#a2c8ac" opacity="0.6"/>
<polygon points="373.8,367.8 374.0,374.0 366.2,386.9 353.1,393.9 353.4,385.6 356.8,378.4 363.6,369.4" fill="#a2c8ac" opacity="0.6"/>
<polygon points="1126.2,247.0 1127.9,259.0 1128.0,270.4 1117.2,274.1 1109.3,276.2 1111.8,262.8 1115.5,252.8" fill="#a2c8ac" opacity="0.6"/>
<polygon points="1054.3,273.7 1058.1,280.4 1059.3,289.8 1047.9,292.7 1039.9,288.1 1040.4,277.7 1045.5,270.4" fill="#a2c8ac" opacity="0.6"/>
<polygon points="433.4,278.4 433.6,282.1 414.3,299.6 403.9,305.8 399.7,303.9 408.9,291.0 428.4,277.3" fill="#a2c8ac" opacity="0.6"/>
<polygon points="327.3,537.2 322.6,549.8 311.7,559.1 300.5,558.9 290.1,555.3 298.3,539.1 316.3,535.4" fill="#aacca8" opacity="0.7"/>
<polygon points="1144.0,552.0 1145.1,563.9 1130.9,577.3 1115.6,584.9 1108.5,577.1 1114.5,562.4 1130.4,550.8" fill="#88b596" opacity="0.4"/>
<polygon points="983.8,499.3 983.4,505.0 969.2,514.9 958.7,519.6 956.5,517.8 963.8,509.7 975.7,502.2" fill="#a2c8ac" opacity="0.6"/>
<polygon points="977.7,285.4 979.5,291.1 969.1,303.3 959.9,305.4 954.4,301.8 958.7,289.9 970.8,283.7" fill="#88b596" opacity="0.4"/>
<polygon points="684.8,582.4 684.4,589.7 677.4,607.7 667.7,619.4 666.1,612.1 666.5,602.5 676.8,589.7" fill="#aacca8" opacity="0.7"/>
<polygon points="980.7,559.7 979.1,569.5 974.8,577.8 965.9,574.2 959.2,566.0 961.4,554.5 973.1,553.6" fill="#a2c8ac" opacity="0.6"/>
<polygon points="1032.2,272.6 1028.1,282.4 1018.8,298.9 999.5,308.6 996.4,298.5 1007.4,286.5 1022.2,270.9" fill="#88b596" opacity="0.4"/>
<polygon points="686.1,468.2 689.7,473.2 684.3,481.1 679.1,485.2 674.5,481.9 675.6,476.1 680.5,466.6" fill="#a2c8ac" opacity="0.6"/>
<polygon points="986.4,515.9 986.1,520.7 976.1,533.3 959.9,539.3 958.5,534.1 966.5,524.7 983.1,513.4" fill="#88b596" opacity="0.4"/>
<polygon points="483.8,267.3 488.9,273.2 485.7,283.7 478.3,291.2 468.9,287.1 471.3,277.4 478.1,266.7" fill="#a2c8ac" opacity="0.6"/>
<polygon points="461.5,222.1 464.3,231.4 460.1,248.7 451.1,252.7 438.1,253.1 437.1,234.6 450.5,223.3" fill="#a2c8ac" opacity="0.6"/>
<polygon points="29,209 334,209 333,227 334,255 337.5,260.5 325.5,264.2 333,271.7 354,275.5 367.5,274.7 375,281.5 390,289 405,304 411,311.5 427.5,307 447,300 462,325 476,354.7 456,377 451,392 453.6,410.8 453,428 435.6,455 420,470.7 410.4,486.2 411.4,509.5 416.2,521 435.6,528.9 453,532.7 458.9,540.5 451,554 443.4,575.3 431.7,598.6 408.5,618 389,637.3 377.5,649 29,649" fill="#c5dad3"/>
<polygon points="420,470.7 435.6,455 453,440 470,470 465,520 458.9,540.5 453,532.7 435.6,528.9 416.2,521 411.4,509.5 410.4,486.2" fill="#a6cdaf" opacity="0.6"/>
<path d="M882,470 C884,462 892,455 904,451 C915,448 932,448 954,456 C970,462 990,472 1008,477 C1020,480 1032,482 1070,489 L1075,520 L1067,534 L1050,589 L980,588 C960,586 950,583 946,580 L910,568 C904,563 900,558 900,554 L896,524 C893,514 890,506 888,500 C884,492 880,486 880,478 Z" fill="#52a065"/>
<polygon points="1190,316 1175.6,335 1173.7,368.7 1173.7,402.5 1140,417.5 1125,440 1140,462.5 1170,492.5 1190,503.7" fill="#52a065"/>
<polyline points="402,286.7 408.7,289.7 406.5,299.5 411,310 427.5,307 438,304.7 445.5,299.5" fill="none" stroke="#fff" stroke-width="2" stroke-linejoin="round"/>
<polyline points="593,209 588.7,218 568.5,219" fill="none" stroke="#fff" stroke-width="2" stroke-linejoin="round"/>
<polyline points="476,354 462,370 456,377 451,392 453.6,410.8 453,436 458,450 468,468 482,486 480,494 486,517 478,532.7 466.6,532.7" fill="none" stroke="#fff" stroke-width="2" stroke-linejoin="round"/>
<polyline points="535,518 546,526 554,530 556,555 558,580 572,585 586,592 589,600 578,614 576,618 582,630 590,649" fill="none" stroke="#fff" stroke-width="2" stroke-linejoin="round"/>
<polyline points="571,549 591,535 609,530 616,535 632,543 645,541 652,560 658,576" fill="none" stroke="#fff" stroke-width="2" stroke-linejoin="round"/>
<polyline points="571,549 573,566 580,576 578,582" fill="none" stroke="#fff" stroke-width="2" stroke-linejoin="round"/>
<polyline points="686,506 682,530 676,540 668,548 662,560 658,576 656,584" fill="none" stroke="#fff" stroke-width="2" stroke-linejoin="round"/>
<polyline points="588,604 600,605 608,602" fill="none" stroke="#fff" stroke-width="2" stroke-linejoin="round"/>
<polyline points="546,582 558,580" fill="none" stroke="#fff" stroke-width="2" stroke-linejoin="round"/>
<polyline points="697,597 714,602 716,612 724,622 732,640 738,649" fill="none" stroke="#fff" stroke-width="2" stroke-linejoin="round"/>
<polyline points="554,649 576,636 584,632" fill="none" stroke="#fff" stroke-width="2" stroke-linejoin="round"/>
<polyline points="449,592.8 453,618 470.5,635.4 472.4,649" fill="none" stroke="#fff" stroke-width="2" stroke-linejoin="round"/>
<polyline points="1051,628.6 1072.5,624.4 1087.4,620 1090.6,613.7 1113,617 1127.7,630.7 1153,649" fill="none" stroke="#fff" stroke-width="2" stroke-linejoin="round"/>
<clipPath id="cpc"><polygon points="447,301 500,277.7 545,270 566,309 477.9,348.5"/></clipPath>
<g clip-path="url(#cpc)" fill="none" stroke="#fff" stroke-width="1.7" opacity="0.92"><path d="M452,306 C462,298 480,292 500,296 C512,299 520,304 518,312"/><path d="M460,313 L500,302 M464,319 L503,309 M468,325 L506,315 M474,331 L510,321 M480,337 L514,327"/><path d="M470,301 L481,334 M487,297 L495,330 M503,299 L509,324"/><path d="M521,296 L545,289 M524,304 L551,297 M527,312 L556,304 M530,320 L559,312 M534,328 L562,320"/><path d="M522,290 L532,335 M540,288 L547,330 M553,292 L558,318"/><path d="M490,338 C515,334 540,327 566,318"/><path d="M456,330 C470,333 480,340 490,345"/></g>
<polygon points="498.4,310 509.7,311 510,316.5 499,317" fill="#2f8f8f" opacity="0.85"/>
<g fill="none" stroke="#fff" stroke-width="1.8" stroke-linejoin="round"><polyline points="479,349 487.5,357.5 485,370 475,375 467.5,385 465,397.5 475,402.5 497.5,400 510,402.5 530,412.5 536,420 550,432.5 562.5,450 585,462.5 570,472.5 565,492.5 565,507.5 550,512.5 540,510"/><polyline points="535,417.5 520,437.5 517.5,462.5 515,482.5 522.5,500 535,511 555,514"/><polyline points="652.5,397.5 655,415 665,425 672.5,435 687.5,450 700,460 715,470"/><polyline points="670,360 687.5,370 700,375 710,387.5 702.5,397.5 695,412.5 690,430 697.5,450 707.5,462.5 715,470"/><polyline points="645,442.5 662.5,440 677.5,447.5 682.5,455"/><polyline points="645,442.5 650,457.5 662.5,470 660,492.5 665,500 687.5,503.75"/></g>
<polygon points="564,446 576,445 580,460 570,464 563,458" fill="#2f8f8f" opacity="0.85"/>
<text x="323" y="235" font-size="17.8" fill="#202124" text-anchor="end">hastanet</text>
<text x="323" y="252.7" font-size="17.8" fill="#202124" text-anchor="end" textLength="47.3" lengthAdjust="spacingAndGlyphs">Beach</text>
<text x="345.7" y="324.5" font-size="17.8" fill="#202124" text-anchor="start" textLength="191" lengthAdjust="spacingAndGlyphs">Diamond Falls Botanical</text>
<text x="342.4" y="342.2" font-size="17.8" fill="#202124" text-anchor="start" textLength="194.3" lengthAdjust="spacingAndGlyphs">Gardens &amp; Mineral Baths</text>
<text x="662.6" y="315.5" font-size="17.8" fill="#202124" text-anchor="start" textLength="131.1" lengthAdjust="spacingAndGlyphs">Toraille Waterfall</text>
<text x="662.6" y="333.1" font-size="17.8" fill="#202124" text-anchor="start" textLength="63.8" lengthAdjust="spacingAndGlyphs">Atv Park</text>
<text x="700.7" y="360.1" font-size="17.8" fill="#202124" text-anchor="start" textLength="172.7" lengthAdjust="spacingAndGlyphs">Enbas Saut Waterfalls</text>
<text x="1065" y="401.9" font-size="17.8" fill="#23385e" text-anchor="start" textLength="123.3" lengthAdjust="spacingAndGlyphs">J&amp;b Enterprises</text>
<text x="953.5" y="464" font-size="17.8" fill="#202124" text-anchor="start" font-style="italic" textLength="123.2" lengthAdjust="spacingAndGlyphs">Des Cartier Trail</text>
<text x="945" y="528.7" font-size="17.8" fill="#202124" text-anchor="start" font-style="italic" textLength="62.7" lengthAdjust="spacingAndGlyphs">Edmund</text>
<text x="919.5" y="546.8" font-size="17.8" fill="#202124" text-anchor="start" font-style="italic" textLength="114.7" lengthAdjust="spacingAndGlyphs">Forest Reserve</text>
<text x="366.8" y="454.7" font-size="17.8" fill="#202124" text-anchor="start" textLength="81.4" lengthAdjust="spacingAndGlyphs">Piton Falls</text>
<text x="326.2" y="496.3" font-size="17.8" fill="#202124" text-anchor="start" textLength="81.3" lengthAdjust="spacingAndGlyphs">Petit Piton</text>
<text x="447.2" y="513.4" font-size="17.8" fill="#202124" text-anchor="start" textLength="68.8" lengthAdjust="spacingAndGlyphs">Qualibou</text>
<text x="332" y="588" font-size="17.8" fill="#202124" text-anchor="start" textLength="161.7" lengthAdjust="spacingAndGlyphs">Tet Paul Nature Trail</text>
<polygon points="338,255 342,255.5 341,259 338.5,262 336,262.5 336.5,259" fill="#e6c56d"/>
<g transform="translate(339.75,231.4)"><path d="M0,24.2 C-1.5,20 -4,16.5 -7,12.6 C-9.8,9.4 -12.45,5.2 -12.45,0 A12.45,12.45 0 1 1 12.45,0 C12.45,5.2 9.8,9.4 7,12.6 C4,16.5 1.5,20 0,24.2 Z" fill="#031b1c" stroke="#000" stroke-width="0.7"/>
<path d="M-3.5,-3.5 C0,-7 6,-6.5 7.6,-1 C8.6,2 8,3.6 7.2,4.3 Z" fill="#fff"/><path d="M-2.2,-2.4 C1,-5 4.6,-4.6 6.4,-1.6 L-0.5,1.2 Z" fill="#031b1c"/><path d="M-4.7,6.4 L3.8,-2" stroke="#fff" stroke-width="1.9"/><circle cx="-6.4" cy="-0.4" r="2" fill="#fff"/>
</g>
<g transform="translate(553.5,321.3)"><path d="M0,24.2 C-1.5,20 -4,16.5 -7,12.6 C-9.8,9.4 -12.45,5.2 -12.45,0 A12.45,12.45 0 1 1 12.45,0 C12.45,5.2 9.8,9.4 7,12.6 C4,16.5 1.5,20 0,24.2 Z" fill="#031b1c" stroke="#000" stroke-width="0.7"/>
<ellipse cx="0.00" cy="-4.30" rx="3.3" ry="2.3" transform="rotate(-90 0.00 -4.30)" fill="#fff"/>
<ellipse cx="4.09" cy="-1.33" rx="3.3" ry="2.3" transform="rotate(-18 4.09 -1.33)" fill="#fff"/>
<ellipse cx="2.53" cy="3.48" rx="3.3" ry="2.3" transform="rotate(54 2.53 3.48)" fill="#fff"/>
<ellipse cx="-2.53" cy="3.48" rx="3.3" ry="2.3" transform="rotate(126 -2.53 3.48)" fill="#fff"/>
<ellipse cx="-4.09" cy="-1.33" rx="3.3" ry="2.3" transform="rotate(198 -4.09 -1.33)" fill="#fff"/>
</g>
<g transform="translate(644.6,312.7)"><path d="M0,24.2 C-1.5,20 -4,16.5 -7,12.6 C-9.8,9.4 -12.45,5.2 -12.45,0 A12.45,12.45 0 1 1 12.45,0 C12.45,5.2 9.8,9.4 7,12.6 C4,16.5 1.5,20 0,24.2 Z" fill="#031b1c" stroke="#000" stroke-width="0.7"/>
<path d="M-7.45,7 V0.8 L-3.3,-2.7 H-2 V-4.4 H3.5 L4.3,-2.7 H7.85 V7 Z" fill="#fff"/><circle cx="0.75" cy="2" r="2.95" fill="#031b1c"/><circle cx="-5.65" cy="-3.2" r="3" fill="#031b1c"/><path d="M-5.65,-5.6 Q-5.2,-3.6 -3.25,-3.2 Q-5.2,-2.8 -5.65,-0.8 Q-6.1,-2.8 -8.05,-3.2 Q-6.1,-3.6 -5.65,-5.6 Z" fill="#fff"/>
</g>
<g transform="translate(889.5,347.9)"><path d="M0,24.2 C-1.5,20 -4,16.5 -7,12.6 C-9.8,9.4 -12.45,5.2 -12.45,0 A12.45,12.45 0 1 1 12.45,0 C12.45,5.2 9.8,9.4 7,12.6 C4,16.5 1.5,20 0,24.2 Z" fill="#031b1c" stroke="#000" stroke-width="0.7"/>
<path d="M-7.45,7 V0.8 L-3.3,-2.7 H-2 V-4.4 H3.5 L4.3,-2.7 H7.85 V7 Z" fill="#fff"/><circle cx="0.75" cy="2" r="2.95" fill="#031b1c"/><circle cx="-5.65" cy="-3.2" r="3" fill="#031b1c"/><path d="M-5.65,-5.6 Q-5.2,-3.6 -3.25,-3.2 Q-5.2,-2.8 -5.65,-0.8 Q-6.1,-2.8 -8.05,-3.2 Q-6.1,-3.6 -5.65,-5.6 Z" fill="#fff"/>
</g>
<g transform="translate(1093.55,451.6)"><path d="M0,24.2 C-1.5,20 -4,16.5 -7,12.6 C-9.8,9.4 -12.45,5.2 -12.45,0 A12.45,12.45 0 1 1 12.45,0 C12.45,5.2 9.8,9.4 7,12.6 C4,16.5 1.5,20 0,24.2 Z" fill="#031b1c" stroke="#000" stroke-width="0.7"/>
<path d="M0,-7.8 L3.9,-1.2 H2.3 L6.2,6.1 H0.8 V9.2 H-0.8 V6.1 H-6.5 L-2.4,-1.2 H-3.9 Z" fill="#fff"/>
</g>
<g transform="translate(465.15,442.85)"><path d="M0,24.2 C-1.5,20 -4,16.5 -7,12.6 C-9.8,9.4 -12.45,5.2 -12.45,0 A12.45,12.45 0 1 1 12.45,0 C12.45,5.2 9.8,9.4 7,12.6 C4,16.5 1.5,20 0,24.2 Z" fill="#031b1c" stroke="#000" stroke-width="0.7"/>
<path d="M-7.45,7 V0.8 L-3.3,-2.7 H-2 V-4.4 H3.5 L4.3,-2.7 H7.85 V7 Z" fill="#fff"/><circle cx="0.75" cy="2" r="2.95" fill="#031b1c"/><circle cx="-5.65" cy="-3.2" r="3" fill="#031b1c"/><path d="M-5.65,-5.6 Q-5.2,-3.6 -3.25,-3.2 Q-5.2,-2.8 -5.65,-0.8 Q-6.1,-2.8 -8.05,-3.2 Q-6.1,-3.6 -5.65,-5.6 Z" fill="#fff"/>
</g>
<g transform="translate(424.4,484.1)"><path d="M0,24.2 C-1.5,20 -4,16.5 -7,12.6 C-9.8,9.4 -12.45,5.2 -12.45,0 A12.45,12.45 0 1 1 12.45,0 C12.45,5.2 9.8,9.4 7,12.6 C4,16.5 1.5,20 0,24.2 Z" fill="#031b1c" stroke="#000" stroke-width="0.7"/>
<path d="M-8.2,6.7 L-1.5,-6.4 L2.2,0.8 L3.4,-1.8 L8,6.7 Z" fill="#fff"/><path d="M-1.5,-6.4 L1.6,-0.6 L0.2,2.4" fill="none" stroke="#031b1c" stroke-width="0.9"/>
</g>
<g transform="translate(533.1,501.1)"><path d="M0,24.2 C-1.5,20 -4,16.5 -7,12.6 C-9.8,9.4 -12.45,5.2 -12.45,0 A12.45,12.45 0 1 1 12.45,0 C12.45,5.2 9.8,9.4 7,12.6 C4,16.5 1.5,20 0,24.2 Z" fill="#031b1c" stroke="#000" stroke-width="0.7"/>
<path d="M-8.2,6.7 L-1.5,-6.4 L2.2,0.8 L3.4,-1.8 L8,6.7 Z" fill="#fff"/><path d="M-1.5,-6.4 L1.6,-0.6 L0.2,2.4" fill="none" stroke="#031b1c" stroke-width="0.9"/>
</g>
<g transform="translate(510.05,575.7)"><path d="M0,24.2 C-1.5,20 -4,16.5 -7,12.6 C-9.8,9.4 -12.45,5.2 -12.45,0 A12.45,12.45 0 1 1 12.45,0 C12.45,5.2 9.8,9.4 7,12.6 C4,16.5 1.5,20 0,24.2 Z" fill="#031b1c" stroke="#000" stroke-width="0.7"/>
<path d="M-7.45,7 V0.8 L-3.3,-2.7 H-2 V-4.4 H3.5 L4.3,-2.7 H7.85 V7 Z" fill="#fff"/><circle cx="0.75" cy="2" r="2.95" fill="#031b1c"/><circle cx="-5.65" cy="-3.2" r="3" fill="#031b1c"/><path d="M-5.65,-5.6 Q-5.2,-3.6 -3.25,-3.2 Q-5.2,-2.8 -5.65,-0.8 Q-6.1,-2.8 -8.05,-3.2 Q-6.1,-3.6 -5.65,-5.6 Z" fill="#fff"/>
</g>
<circle cx="492" cy="226" r="17" fill="#ea4335"/><circle cx="492" cy="226" r="6" fill="#b31412"/>
<polygon points="447,301 500,277.7 545,270 566,309 477.9,348.5" fill="#0a48fa" fill-opacity="0.4" stroke="#1a3cf2" stroke-width="2.2" stroke-linejoin="round"/>
<polygon points="477.9,348.5 590.4,298.7 682,303 742,380 754,454 690,503 595,522 501,517 451.1,419.5" fill="#0a48fa" fill-opacity="0.4" stroke="#1a3cf2" stroke-width="2.2" stroke-linejoin="round"/>
<polygon points="539,646 753,576 753,660 539,660" fill="#ff3d34" fill-opacity="0.4" stroke="#f03a2a" stroke-width="2.2"/>
<defs><filter id="sh" x="-20%" y="-20%" width="140%" height="150%"><feDropShadow dx="0" dy="2" stdDeviation="3" flood-color="#000" flood-opacity="0.3"/></filter></defs>
<g filter="url(#sh)"><rect x="435.7" y="220.2" width="141.59999999999997" height="71.5" rx="8" fill="#fff"/><polygon points="492.1,290.7 521.1,290.7 506.6,305.7" fill="#fff"/></g>
<path d="M560.6,226.7 L571.1999999999999,237.3 M571.1999999999999,226.7 L560.6,237.3" stroke="#5f6368" stroke-width="1.6"/>
<text x="514.2" y="252.9" font-size="16" font-weight="bold" fill="#3c4043" text-anchor="middle" textLength="125.5" lengthAdjust="spacingAndGlyphs">Central Soufriere</text>
<text x="514.2" y="283.8" font-size="16" font-weight="bold" fill="#3c4043" text-anchor="middle" textLength="41.9" lengthAdjust="spacingAndGlyphs">$8.50</text>
<g filter="url(#sh)"><rect x="537" y="326.1" width="131.79999999999995" height="70.89999999999998" rx="8" fill="#fff"/><polygon points="587.5,396 616.5,396 602,410" fill="#fff"/></g>
<path d="M651.7,332.2 L662.3,342.8 M662.3,332.2 L651.7,342.8" stroke="#5f6368" stroke-width="1.6"/>
<text x="610.5" y="358.5" font-size="16" font-weight="bold" fill="#3c4043" text-anchor="middle" textLength="115" lengthAdjust="spacingAndGlyphs">Soufriere South</text>
<text x="610.5" y="389.5" font-size="16" font-weight="bold" fill="#3c4043" text-anchor="middle" textLength="51.2" lengthAdjust="spacingAndGlyphs">$10.50</text>
<g filter="url(#sh)"><rect x="608" y="584" width="76.39999999999998" height="96" rx="8" fill="#fff"/><polygon points="631.5,679 660.5,679 646,700" fill="#fff"/></g>
<path d="M667.7,590.3000000000001 L678.3,600.9 M678.3,590.3000000000001 L667.7,600.9" stroke="#5f6368" stroke-width="1.6"/>
<text x="653.2" y="617" font-size="16" font-weight="bold" fill="#3c4043" text-anchor="middle" textLength="58.4" lengthAdjust="spacingAndGlyphs">Region1</text>
<text x="653.2" y="647" font-size="16" font-weight="bold" fill="#3c4043" text-anchor="middle" textLength="41.4" lengthAdjust="spacingAndGlyphs">$0.00</text>
<g filter="url(#sh2)"><rect x="42.2" y="222.2" width="213.6" height="50.5" rx="2.5" fill="#fff"/></g>
<defs><filter id="sh2" x="-10%" y="-10%" width="120%" height="140%"><feDropShadow dx="0" dy="1" stdDeviation="1" flood-color="#000" flood-opacity="0.3"/></filter></defs>
<line x1="129.5" y1="224" x2="129.5" y2="271" stroke="#ebebeb" stroke-width="1.2"/>
<text x="64.7" y="254.7" font-size="22.5" font-weight="bold" fill="#000" textLength="43.8" lengthAdjust="spacingAndGlyphs">Map</text>
<text x="153.2" y="254.7" font-size="22.5" fill="#565656" textLength="80.5" lengthAdjust="spacingAndGlyphs">Satellite</text>
<g filter="url(#sh2)"><rect x="1126" y="222" width="50.7" height="50.7" rx="2.5" fill="#fff"/></g>
<path d="M1141.35,244.9 V237.45 H1147.6 M1155.1,237.45 H1161.35 V244.9 M1161.35,250.1 V257.55 H1155.1 M1147.6,257.55 H1141.35 V250.1" fill="none" stroke="#5f6368" stroke-width="2.7"/>
<g filter="url(#sh2)"><rect x="1126" y="514.8" width="50.7" height="103" rx="2.5" fill="#fff"/></g>
<line x1="1133" y1="566.4" x2="1170" y2="566.4" stroke="#e6e6e6" stroke-width="1.2"/>
<path d="M1139.9,540.2 h23 M1151.4,528.7 v23" stroke="#63676b" stroke-width="4.7"/>
<path d="M1139.9,592.3 h23" stroke="#63676b" stroke-width="4.7"/>
<text x="41.5" y="638.75" font-size="23" font-weight="bold" fill="#fff" stroke="#888" stroke-width="2.5" paint-order="stroke" letter-spacing="-1">Google</text>
<rect x="864.7" y="630.7" width="326" height="18" fill="#f5f5f5" fill-opacity="0.75"/>
<line x1="989" y1="631" x2="989" y2="649" stroke="#ddd" stroke-width="1.5"/><line x1="1099.5" y1="631" x2="1099.5" y2="649" stroke="#ddd" stroke-width="1.5"/>
<text x="871" y="644.6" font-size="12.8" fill="#000" textLength="109" lengthAdjust="spacingAndGlyphs">Keyboard shortcuts</text>
<text x="997" y="644.6" font-size="12.8" fill="#000" textLength="94" lengthAdjust="spacingAndGlyphs">Map data ©2023</text>
<text x="1107" y="644.6" font-size="12.8" fill="#000" textLength="74.5" lengthAdjust="spacingAndGlyphs">Terms of Use</text>
</svg></div>
<div class="t" style="left:608px;transform:translateX(-50%);top:676.01px;font-size:17px;color:#2c3338;font-weight:700;">Save your changes to update the preview</div>
<div class="box" style="left:11.5px;top:755.3px;width:1193.5px;height:308px"></div>
<div class="hb" style="left:12px;top:802px;width:1192px"></div>
<div class="t" style="left:28.5px;top:770.39px;font-size:19.5px;color:#1d2327;font-weight:700;transform:scaleX(0.91);transform-origin:0 0">Shipping Settings</div>
<svg style="left:0;top:0" width="1600" height="1445" viewBox="0 0 1600 1445"><polyline points="1100.0,783.6 1108.4,775.6999999999999 1116.8000000000002,783.6" fill="none" stroke="#787c82" stroke-width="2.2"/><polyline points="1133.2,775.6999999999999 1141.4,784.1 1149.6000000000001,775.6999999999999" fill="none" stroke="#787c82" stroke-width="2.2"/><polygon points="1181.3,775.1999999999999 1186.1,782.6 1176.5,782.6" fill="#787c82"/></svg>
<div class="t" style="left:28.5px;top:815.61px;font-size:17px;color:#3c434a;">Show Regions</div>
<div class="t" style="left:614.7px;top:815.61px;font-size:17px;color:#3c434a;">Show Store Locations</div>
<div class="r" style="left:28.3px;top:847.3px;width:508.7px;height:115.5px;background:#fff;border:1.3px solid #8c8f94;border-radius:5px"></div>
<div class="r" style="left:614.7px;top:847.3px;width:508.7px;height:51px;background:#fff;border:1.3px solid #8c8f94;border-radius:5px"></div>
<div class="r" style="left:36px;top:855px;width:158.7px;height:24.5px;background:#e4e4e4;border:1.3px solid #aaa;border-radius:4px"></div>
<div class="t" style="left:44.2px;top:859.90px;font-size:15px;color:#888;font-weight:700;">&#215;</div>
<div class="t" style="left:57.3px;top:859.21px;font-size:17px;color:#3c434a;">Central Soufriere</div>
<div class="r" style="left:202.3px;top:855px;width:148.5px;height:24.5px;background:#e4e4e4;border:1.3px solid #aaa;border-radius:4px"></div>
<div class="t" style="left:210.5px;top:859.90px;font-size:15px;color:#888;font-weight:700;">&#215;</div>
<div class="t" style="left:223.60000000000002px;top:859.21px;font-size:17px;color:#3c434a;">Soufriere South</div>
<div class="r" style="left:357.8px;top:855px;width:141.0px;height:24.5px;background:#e4e4e4;border:1.3px solid #aaa;border-radius:4px"></div>
<div class="t" style="left:366.0px;top:859.90px;font-size:15px;color:#888;font-weight:700;">&#215;</div>
<div class="t" style="left:379.1px;top:859.21px;font-size:17px;color:#3c434a;">Castries South</div>
<div class="r" style="left:36px;top:886.8px;width:134.5px;height:24.5px;background:#e4e4e4;border:1.3px solid #aaa;border-radius:4px"></div>
<div class="t" style="left:44.2px;top:891.70px;font-size:15px;color:#888;font-weight:700;">&#215;</div>
<div class="t" style="left:57.3px;top:891.01px;font-size:17px;color:#3c434a;">Castries West</div>
<div class="r" style="left:178px;top:886.8px;width:110.39999999999998px;height:24.5px;background:#e4e4e4;border:1.3px solid #aaa;border-radius:4px"></div>
<div class="t" style="left:186.2px;top:891.70px;font-size:15px;color:#888;font-weight:700;">&#215;</div>
<div class="t" style="left:199.3px;top:891.01px;font-size:17px;color:#3c434a;">Mongiraud</div>
<div class="r" style="left:295.7px;top:886.8px;width:84.10000000000002px;height:24.5px;background:#e4e4e4;border:1.3px solid #aaa;border-radius:4px"></div>
<div class="t" style="left:303.9px;top:891.70px;font-size:15px;color:#888;font-weight:700;">&#215;</div>
<div class="t" style="left:317.0px;top:891.01px;font-size:17px;color:#3c434a;">Corinth</div>
<div class="r" style="left:387.2px;top:886.8px;width:129.09999999999997px;height:24.5px;background:#e4e4e4;border:1.3px solid #aaa;border-radius:4px"></div>
<div class="t" style="left:395.4px;top:891.70px;font-size:15px;color:#888;font-weight:700;">&#215;</div>
<div class="t" style="left:408.5px;top:891.01px;font-size:17px;color:#3c434a;">Castries East</div>
<div class="r" style="left:36px;top:919.2px;width:152px;height:24.5px;background:#e4e4e4;border:1.3px solid #aaa;border-radius:4px"></div>
<div class="t" style="left:44.2px;top:924.10px;font-size:15px;color:#888;font-weight:700;">&#215;</div>
<div class="t" style="left:57.3px;top:923.41px;font-size:17px;color:#3c434a;">Castries Central</div>
<div class="r" style="left:195px;top:919.2px;width:139.5px;height:24.5px;background:#e4e4e4;border:1.3px solid #aaa;border-radius:4px"></div>
<div class="t" style="left:203.2px;top:924.10px;font-size:15px;color:#888;font-weight:700;">&#215;</div>
<div class="t" style="left:216.3px;top:923.41px;font-size:17px;color:#3c434a;">Castries North</div>
<div class="r" style="left:341.9px;top:919.2px;width:87.60000000000002px;height:24.5px;background:#e4e4e4;border:1.3px solid #aaa;border-radius:4px"></div>
<div class="t" style="left:350.09999999999997px;top:924.10px;font-size:15px;color:#888;font-weight:700;">&#215;</div>
<div class="t" style="left:363.2px;top:923.41px;font-size:17px;color:#3c434a;">Region1</div>
<div class="r" style="left:622.5px;top:855px;width:175.5px;height:24.5px;background:#e4e4e4;border:1.3px solid #aaa;border-radius:4px"></div>
<div class="t" style="left:630.7px;top:859.90px;font-size:15px;color:#888;font-weight:700;">&#215;</div>
<div class="t" style="left:643.8px;top:859.21px;font-size:17px;color:#3c434a;">Bridge Street Store</div>
<div class="r" style="left:805.4px;top:855px;width:140.70000000000005px;height:24.5px;background:#e4e4e4;border:1.3px solid #aaa;border-radius:4px"></div>
<div class="t" style="left:813.6px;top:859.90px;font-size:15px;color:#888;font-weight:700;">&#215;</div>
<div class="t" style="left:826.6999999999999px;top:859.21px;font-size:17px;color:#3c434a;">Dame Dr Store</div>
<div class="t" style="left:28.5px;top:991.91px;font-size:17px;color:#3c434a;">Display Shipping Regions Name</div>
<div class="t" style="left:321.5px;top:991.91px;font-size:17px;color:#3c434a;">Display Shipping Regions Price</div>
<div class="r" style="left:28.4px;top:1013px;width:19.8px;height:19.8px;background:#fff;border:1.3px solid #8c8f94;border-radius:4.5px"></div>
<svg style="left:28.4px;top:1013px" width="20" height="20" viewBox="0 0 20 20"><polyline points="4.2,9.5 8,13.4 15.5,4.6" fill="none" stroke="#6b7075" stroke-width="2.6" stroke-linejoin="miter"/></svg>
<div class="r" style="left:321.6px;top:1013px;width:19.8px;height:19.8px;background:#fff;border:1.3px solid #8c8f94;border-radius:4.5px"></div>
<svg style="left:321.6px;top:1013px" width="20" height="20" viewBox="0 0 20 20"><polyline points="4.2,9.5 8,13.4 15.5,4.6" fill="none" stroke="#6b7075" stroke-width="2.6" stroke-linejoin="miter"/></svg>
<div class="box" style="left:11.5px;top:1090.6px;width:1193.5px;height:325px"></div>
<div class="hb" style="left:12px;top:1136.5px;width:1192px"></div>
<div class="t" style="left:28.5px;top:1105.79px;font-size:19.5px;color:#1d2327;font-weight:700;transform:scaleX(0.91);transform-origin:0 0">Display Settings</div>
<svg style="left:0;top:0" width="1600" height="1445" viewBox="0 0 1600 1445"><polyline points="1100.0,1118.0 1108.4,1110.1 1116.8000000000002,1118.0" fill="none" stroke="#787c82" stroke-width="2.2"/><polyline points="1133.2,1110.1 1141.4,1118.5 1149.6000000000001,1110.1" fill="none" stroke="#787c82" stroke-width="2.2"/><polygon points="1181.3,1109.6 1186.1,1117.0 1176.5,1117.0" fill="#787c82"/></svg>
<div class="t" style="left:28.5px;top:1149.21px;font-size:17px;color:#3c434a;">Map ID</div>
<div class="t" style="left:322.3px;top:1149.21px;font-size:17px;color:#3c434a;">Zoom Level</div>
<div class="t" style="left:615.3px;top:1149.21px;font-size:17px;color:#3c434a;">Map Type</div>
<div class="t" style="left:908px;top:1149.21px;font-size:17px;color:#3c434a;">Background Color</div>
<div class="r" style="left:29.6px;top:1169.2px;width:220.5px;height:37.3px;background:#fff;border:1.3px solid #8c8f94;border-radius:5px"></div>
<div class="t" style="left:41px;top:1177.65px;font-size:19.2px;color:#2c3338;">e3d30b3edf8a38be</div>
<div class="r" style="left:323px;top:1169.2px;width:67.6px;height:37.3px;background:#fff;border:1.3px solid #8c8f94;border-radius:5px"></div>
<div class="t" style="left:334.5px;top:1177.82px;font-size:19px;color:#2c3338;">12</div>
<div class="r" style="left:616.3px;top:1169.2px;width:125px;height:37.3px;background:#fff;border:1.3px solid #8c8f94;border-radius:5px"></div>
<div class="t" style="left:627.8px;top:1178.92px;font-size:17.7px;color:#2c3338;">Road Map</div>
<svg style="left:0;top:0" width="1600" height="1445"><polyline points="718.3,1184.5 724,1190.2 729.7,1184.5" fill="none" stroke="#2c3338" stroke-width="1.8"/></svg>
<div class="r" style="left:909.3px;top:1169.2px;width:106.2px;height:37.3px;background:#fff;border:1.3px solid #8c8f94;border-radius:5px"></div>
<div class="t" style="left:920.5px;top:1178.24px;font-size:18.5px;color:#2c3338;">#eee</div>
<div class="t" style="left:28.3px;top:1215.74px;font-size:13.3px;color:#2271b1;"><u>Learn more</u></div>
<div class="t" style="left:28.5px;top:1247.81px;font-size:17px;color:#3c434a;">Height</div>
<div class="t" style="left:322.3px;top:1247.81px;font-size:17px;color:#3c434a;">Width</div>
<div class="t" style="left:615.3px;top:1247.81px;font-size:17px;color:#3c434a;">Clickable Icons</div>
<div class="t" style="left:908px;top:1247.81px;font-size:17px;color:#3c434a;">Show Streetview Control</div>
<div class="r" style="left:29.6px;top:1269.3px;width:220.5px;height:37px;background:#fff;border:1.3px solid #8c8f94;border-radius:5px"></div>
<div class="t" style="left:41px;top:1277.82px;font-size:19px;color:#2c3338;">300</div>
<div class="r" style="left:323px;top:1269.3px;width:220.8px;height:37px;background:#fff;border:1.3px solid #8c8f94;border-radius:5px"></div>
<div class="t" style="left:322px;top:1309.60px;font-size:13px;color:#3c434a;letter-spacing:0.3px">Leave empty to make width 100%</div>
<div class="r" style="left:614.8px;top:1270px;width:19.8px;height:19.8px;background:#fff;border:1.3px solid #8c8f94;border-radius:4.5px"></div>
<div class="r" style="left:908.1px;top:1270px;width:19.8px;height:19.8px;background:#fff;border:1.3px solid #8c8f94;border-radius:4.5px"></div>
<div class="t" style="left:28.5px;top:1342.01px;font-size:17px;color:#3c434a;">Default Coordinates</div>
<div class="r" style="left:29.6px;top:1362.2px;width:220.5px;height:37px;background:#fff;border:1.3px solid #8c8f94;border-radius:5px"></div>
<div class="t" style="left:41px;top:1371.24px;font-size:18.5px;color:#2c3338;">13.89815980765316</div>
<div class="r" style="left:258px;top:1362.2px;width:220.7px;height:37px;background:#fff;border:1.3px solid #8c8f94;border-radius:5px"></div>
<div class="t" style="left:269px;top:1370.65px;font-size:19.2px;color:#2c3338;">-60.97688220671345</div>
<div class="box" style="left:1230.7px;top:75.2px;width:356px;height:290px"></div>
<div class="hb" style="left:1231px;top:122.2px;width:355px"></div>
<div class="t" style="left:1247px;top:90.69px;font-size:19.5px;color:#1d2327;font-weight:700;transform:scaleX(0.91);transform-origin:0 0">Publish</div>
<svg style="left:0;top:0" width="1600" height="1445" viewBox="0 0 1600 1445"><polyline points="1481.6,104.10000000000001 1490,96.2 1498.4,104.10000000000001" fill="none" stroke="#a7aaad" stroke-width="2.2"/><polyline points="1514.6,96.2 1522.8,104.60000000000001 1531.0,96.2" fill="none" stroke="#787c82" stroke-width="2.2"/><polygon points="1563.2,95.7 1568.0,103.10000000000001 1558.4,103.10000000000001" fill="#787c82"/></svg>
<div class="t" style="left:1277.6px;top:155.11px;font-size:17px;color:#3c434a;">Status: <b style="color:#2c3338">Published</b> <u style="color:#2271b1">Edit</u></div>
<div class="t" style="left:1277.6px;top:197.61px;font-size:17px;color:#3c434a;">Visibility: <b style="color:#2c3338">Public</b> <u style="color:#2271b1">Edit</u></div>
<div class="t" style="left:1277.6px;top:240.91px;font-size:17px;color:#3c434a;">Published on: <b style="color:#2c3338">Feb 11, 2023 at 18:43</b></div>
<div class="t" style="left:1245px;top:266.21px;font-size:17px;color:#2271b1;"><u>Edit</u></div>
<div class="r" style="left:1231.5px;top:297.2px;width:354.5px;height:67.2px;background:#f6f7f7;border-top:1.3px solid #dcdcde"></div>
<div class="t" style="left:1245px;top:322.11px;font-size:17px;color:#b32d2e;"><u>Move to Trash</u></div>
<div class="r" style="left:1483px;top:311.3px;width:89.7px;height:40.4px;background:#9dba9e;border-radius:4px"></div>
<div class="t" style="left:1527.8px;transform:translateX(-50%);top:323.11px;font-size:17px;color:#fff;">Update</div>
<svg style="left:0;top:0" width="1600" height="1445" viewBox="0 0 1600 1445" fill="#50575e"><circle cx="1255.8" cy="159.3" r="5.2"/><rect x="1254.6" y="160" width="2.4" height="13.5" rx="1"/><path d="M1244.5,208 Q1255.7,196 1267,208 Q1255.7,220 1244.5,208 Z M1247.2,208 Q1255.7,217 1264.3,208 Q1255.7,199.5 1247.2,208 Z" fill-rule="evenodd"/><circle cx="1255.7" cy="207.3" r="4.6"/><path d="M1245.8,241.5 h20.3 v18 h-20.3 Z M1247.6,247 v10.7 h16.7 v-10.7 Z" fill-rule="evenodd"/><rect x="1249.5" y="249" width="2.2" height="7.5"/><rect x="1254.7" y="249" width="2.2" height="7.5"/><rect x="1259.9" y="249" width="2.2" height="7.5"/><rect x="1250" y="238.8" width="2" height="5" rx="1"/><rect x="1260" y="238.8" width="2" height="5" rx="1"/></svg>
<div class="box" style="left:1230.7px;top:391.2px;width:356px;height:116.5px"></div>
<div class="hb" style="left:1231px;top:438.2px;width:355px"></div>
<div class="t" style="left:1247px;top:406.19px;font-size:19.5px;color:#1d2327;font-weight:700;transform:scaleX(0.91);transform-origin:0 0">Shortcode</div>
<svg style="left:0;top:0" width="1600" height="1445" viewBox="0 0 1600 1445"><polyline points="1481.6,420.2 1490,412.3 1498.4,420.2" fill="none" stroke="#787c82" stroke-width="2.2"/><polyline points="1514.6,412.3 1522.8,420.7 1531.0,412.3" fill="none" stroke="#787c82" stroke-width="2.2"/><polygon points="1563.2,411.8 1568.0,419.2 1558.4,419.2" fill="#787c82"/></svg>
<div class="r" style="left:1255px;top:451px;width:301px;height:34.7px;background:#f0f0f1"></div>
<div class="t" style="left:1261px;top:460.22px;font-size:22.9px;color:#3c434a;font-family:'Liberation Mono',monospace;transform:scaleY(1.12);transform-origin:0 19.4px;-webkit-text-stroke:0.35px #3c434a">[kikote_map id='963']</div></body></html>
